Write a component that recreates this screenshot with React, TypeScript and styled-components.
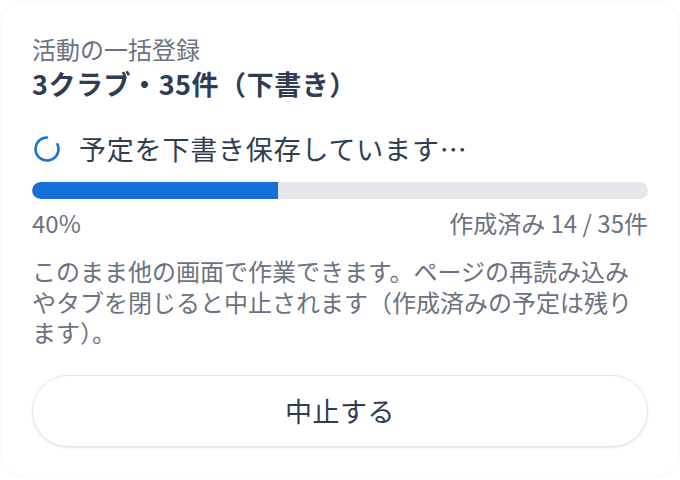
import React from 'react';
import styled, { createGlobalStyle } from 'styled-components';

const GlobalStyle = createGlobalStyle`
	html, body {
		margin: 0;
		padding: 0;
		background: #ffffff;
	}
	body {
		font-family: "Noto Sans CJK JP", "Noto Sans", sans-serif;
	}
`;

const colors = {
	ink: '#2f3d51',
	muted: '#6b7280',
	blue: '#1570d8',
	track: '#e6e7eb',
	line: '#e4e6ea',
};

const Card = styled.div`
	box-sizing: border-box;
	margin: 2px;
	height: 474px;
	padding: 31px 30px 0;
	border-radius: 22px;
	background: #fff;
	box-shadow: 0 0 5px rgba(0, 0, 0, 0.05);
	display: flex;
	flex-direction: column;
`;

const Eyebrow = styled.div`
	font-size: 24px;
	line-height: 32px;
	color: ${colors.muted};
`;

const Title = styled.h1`
	margin: 2px 0 0;
	font-size: 27px;
	line-height: 34px;
	font-weight: 700;
	letter-spacing: 0.02em;
	color: ${colors.ink};
`;

const StatusRow = styled.div`
	display: flex;
	align-items: center;
	gap: 18px;
	margin-top: 30px;
	padding-left: 1px;
`;

const StatusText = styled.span`
	font-size: 27px;
	line-height: 36px;
	letter-spacing: 0.03em;
	color: ${colors.ink};
`;

const Track = styled.div`
	margin-top: 15px;
	height: 17px;
	border-radius: 9px;
	background: ${colors.track};
	overflow: hidden;
`;

const Fill = styled.div`
	height: 100%;
	background: ${colors.blue};
	border-radius: 9px 0 0 9px;
`;

const Meta = styled.div`
	display: flex;
	justify-content: space-between;
	margin-top: 8px;
	font-size: 24px;
	line-height: 32px;
	color: ${colors.muted};
`;

const Note = styled.p`
	margin: 17px 0 0;
	font-size: 24px;
	line-height: 30.5px;
	color: ${colors.muted};
`;

const CancelButton = styled.button`
	margin-top: 27px;
	height: 72px;
	border-radius: 36px;
	border: 1px solid ${colors.line};
	background: #fff;
	box-shadow: 0 1px 3px rgba(0, 0, 0, 0.1);
	font-family: inherit;
	font-size: 27px;
	letter-spacing: 0.02em;
	color: ${colors.ink};
	cursor: pointer;
`;

const Spinner = () => (
	<svg width="28" height="28" viewBox="0 0 28 28" fill="none">
		<path
			d="M14 2.5 A11.5 11.5 0 1 0 24.5 9.3"
			stroke={colors.blue}
			strokeWidth="2.6"
			strokeLinecap="round"
		/>
	</svg>
);

const total = 35;
const done = 14;

export default function App() {
	const pct = Math.round((done / total) * 100);
	return (
		<>
			<GlobalStyle />
			<Card>
				<Eyebrow>活動の一括登録</Eyebrow>
				<Title>3クラブ・35件（下書き）</Title>
				<StatusRow>
					<Spinner />
					<StatusText>予定を下書き保存しています…</StatusText>
				</StatusRow>
				<Track>
					<Fill style={{ width: `${pct}%` }} />
				</Track>
				<Meta>
					<span>{pct}%</span>
					<span>作成済み {done} / {total}件</span>
				</Meta>
				<Note>
					このまま他の画面で作業できます。ページの再読み込みやタブを閉じると中止されます（作成済みの予定は残ります）。
				</Note>
				<CancelButton>中止する</CancelButton>
			</Card>
		</>
	);
}
